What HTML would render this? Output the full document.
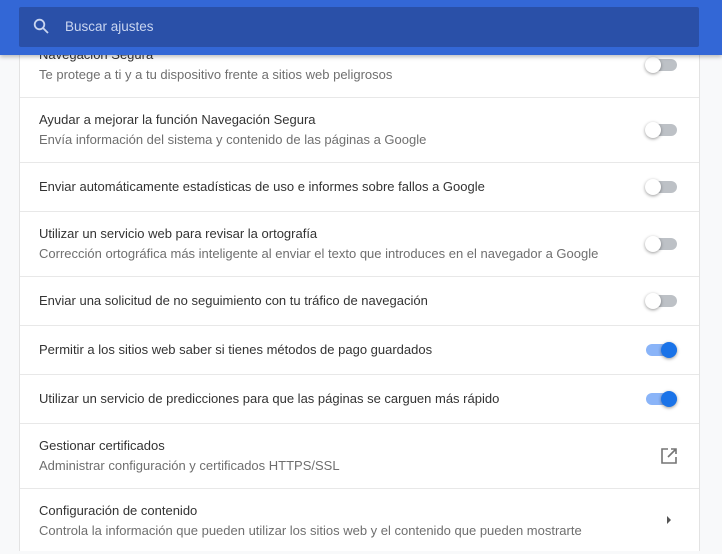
<!DOCTYPE html>
<html><head><meta charset="utf-8"><style>
*{margin:0;padding:0;box-sizing:border-box}
body{width:722px;height:551px;overflow:hidden;background:#f8f9fa;font-family:"Liberation Sans",sans-serif;position:relative}
.hdr{position:absolute;left:0;top:0;width:722px;height:55px;background:#3367d6;box-shadow:0 2px 4px rgba(0,0,0,.25);z-index:5}
.search{position:absolute;left:19px;top:7px;width:680px;height:40px;background:#2a50a8;border-radius:2px}
.search svg{position:absolute;left:14px;top:11px}
.search span{position:absolute;left:46px;top:12px;color:#c9d5f0;font-size:13.5px}
.card{position:absolute;left:19px;top:0;width:681px;height:551px;background:#fff;border-left:1px solid #e3e3e3;border-right:1px solid #e3e3e3}
.row{position:absolute;left:0;width:679px;border-bottom:1px solid #e8e8e8}
.t{position:absolute;left:19px;font-size:13px;color:#333}
.s{position:absolute;left:19px;font-size:13px;color:#6f6f6f}
.tg{position:absolute;left:626px;width:31px;height:12px;border-radius:6px;background:#bdc1c6}
.tg i{position:absolute;left:-1px;top:-2px;width:16px;height:16px;border-radius:50%;background:#fff;box-shadow:0 1px 3px rgba(0,0,0,.4)}
.on{background:#8ab4f8}
.on i{left:15px;background:#1a73e8}
</style></head><body>
<div class="card">
<div class="row" style="top:40px;height:58px"><div class="t" style="top:7px">Navegación Segura</div><div class="s" style="top:27px">Te protege a ti y a tu dispositivo frente a sitios web peligrosos</div><div class="tg" style="top:19px"><i></i></div></div>
<div class="row" style="top:98px;height:65px"><div class="t" style="top:14px">Ayudar a mejorar la función Navegación Segura</div><div class="s" style="top:34px">Envía información del sistema y contenido de las páginas a Google</div><div class="tg" style="top:26px"><i></i></div></div>
<div class="row" style="top:163px;height:49px"><div class="t" style="top:16px">Enviar automáticamente estadísticas de uso e informes sobre fallos a Google</div><div class="tg" style="top:18px"><i></i></div></div>
<div class="row" style="top:212px;height:65px"><div class="t" style="top:14px">Utilizar un servicio web para revisar la ortografía</div><div class="s" style="top:34px">Corrección ortográfica más inteligente al enviar el texto que introduces en el navegador a Google</div><div class="tg" style="top:26px"><i></i></div></div>
<div class="row" style="top:277px;height:49px"><div class="t" style="top:16px">Enviar una solicitud de no seguimiento con tu tráfico de navegación</div><div class="tg" style="top:18px"><i></i></div></div>
<div class="row" style="top:326px;height:49px"><div class="t" style="top:16px">Permitir a los sitios web saber si tienes métodos de pago guardados</div><div class="tg on" style="top:18px"><i></i></div></div>
<div class="row" style="top:375px;height:49px"><div class="t" style="top:16px">Utilizar un servicio de predicciones para que las páginas se carguen más rápido</div><div class="tg on" style="top:18px"><i></i></div></div>
<div class="row" style="top:424px;height:65px"><div class="t" style="top:14px">Gestionar certificados</div><div class="s" style="top:34px">Administrar configuración y certificados HTTPS/SSL</div>
<svg style="position:absolute;left:640px;top:23px" width="18" height="18" viewBox="0 0 18 18" fill="none" stroke="#757575" stroke-width="1.6"><path d="M8 2H2v14h14v-6"/><path d="M11 2h5v5M16 2l-8 8"/></svg></div>
<div class="row" style="top:489px;height:65px;border:none"><div class="t" style="top:14px">Configuración de contenido</div><div class="s" style="top:34px">Controla la información que pueden utilizar los sitios web y el contenido que pueden mostrarte</div>
<svg style="position:absolute;left:646px;top:26px" width="6" height="10" viewBox="0 0 6 10"><path d="M1 1l4 4-4 4z" fill="#555"/></svg></div>
</div>
<div class="hdr"><div class="search">
<svg width="16" height="16" viewBox="0 0 16 16" fill="none" stroke="#c9d5f0" stroke-width="1.8"><circle cx="6.5" cy="6.5" r="4.8"/><path d="M10 10l5 5"/></svg><span>Buscar ajustes</span></div></div>
</body></html>
